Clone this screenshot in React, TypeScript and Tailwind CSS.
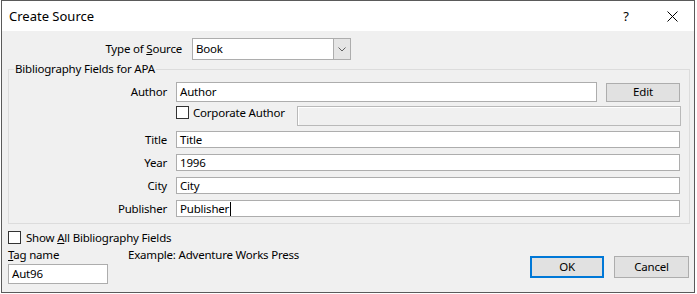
import React from "react";

const inputCls =
  "flex h-full w-full items-center border border-[#adadad] bg-white px-[3px] text-black";

function Field({ value, cursor }: { value: string; cursor?: boolean }) {
  return (
    <div className={inputCls}>
      <span>{value}</span>
      {cursor && <span className="ml-px h-[14px] w-px bg-black" />}
    </div>
  );
}

function Checkbox() {
  return <div className="h-[13px] w-[13px] shrink-0 border border-[#333333] bg-white" />;
}

function Row({ label, value, cursor }: { label: string; value: string; cursor?: boolean }) {
  return (
    <div className="flex h-[17px] items-center">
      <div className="w-[158px] text-right">{label}</div>
      <div className="ml-[9px] h-full w-[504px]">
        <Field value={value} cursor={cursor} />
      </div>
    </div>
  );
}

export default function App() {
  return (
    <div
      className="h-[294px] w-[697px] bg-white text-[11.5px] leading-[16px] tracking-[-0.2px] text-black"
      style={{ fontFamily: '"Noto Sans", "Segoe UI", sans-serif' }}
    >
      <div className="ml-px flex h-[293px] w-[694px] flex-col border border-[#5a5a5a]">
        {/* title bar */}
        <div className="flex h-[30px] shrink-0 items-center bg-white pl-[7px] tracking-normal">
          <span className="text-[13px]">Create Source</span>
          <span className="ml-auto text-[13px]">?</span>
          <svg className="ml-[38px] mr-[16px]" width="11" height="11" viewBox="0 0 11 11">
            <path d="M0.5 0.5 L10.5 10.5 M10.5 0.5 L0.5 10.5" stroke="#000" strokeWidth="1" />
          </svg>
        </div>

        {/* body */}
        <div className="flex flex-1 flex-col bg-[#f0f0f0]">
          {/* type of source */}
          <div className="mt-[7px] flex h-[22px] items-center">
            <div className="w-[180px] text-right">
              Type of <span className="underline">S</span>ource
            </div>
            <div className="ml-[10px] flex h-full w-[159px] border border-[#adadad] bg-white">
              <div className="flex flex-1 items-center px-[3px]">Book</div>
              <div className="flex w-[17px] items-center justify-center border-l border-[#adadad] bg-[#e5e5e5]">
                <svg width="8" height="5" viewBox="0 0 8 5">
                  <path d="M0.5 0.5 L4 4 L7.5 0.5" fill="none" stroke="#606060" strokeWidth="1" />
                </svg>
              </div>
            </div>
          </div>

          {/* group box */}
          <fieldset className="ml-[6px] mt-[1px] h-[163px] w-[682px] border border-[#dcdcdc] pl-0">
            <legend className="ml-[5px] px-px">Bibliography Fields for APA</legend>

            <div className="mt-[5px] flex h-[20px] items-center">
              <div className="w-[158px] text-right">Author</div>
              <div className="ml-[9px] h-full w-[421px]">
                <Field value="Author" />
              </div>
              <div className="ml-[9px] flex h-[19px] w-[74px] items-center justify-center border border-[#adadad] bg-[#e1e1e1]">
                Edit
              </div>
            </div>

            <div className="mt-[4px] flex h-[20px] items-start">
              <div className="ml-[167px] flex items-center">
                <Checkbox />
                <span className="ml-[4px] leading-[13px]">Corporate Author</span>
              </div>
              <div className="ml-auto mr-[8px] h-full w-[384px] border border-[#b9b9b9] bg-[#f0f0f0] shadow-[inset_1px_1px_0_#ffffff]" />
            </div>

            <div className="mt-[5px] flex flex-col gap-[6px]">
              <Row label="Title" value="Title" />
              <Row label="Year" value="1996" />
              <Row label="City" value="City" />
              <Row label="Publisher" value="Publisher" cursor />
            </div>
          </fieldset>

          {/* bottom area */}
          <div className="mt-[7px] flex h-[13px] items-center pl-[6px]">
            <Checkbox />
            <span className="ml-[5px]">
              Show <span className="underline">A</span>ll Bibliography Fields
            </span>
          </div>

          <div className="flex pl-[6px] pr-[5px]">
            <div className="flex flex-col">
              <div className="mt-[3px] flex h-[16px] items-center">
                <span className="w-[120px]">
                  <span className="underline">T</span>ag name
                </span>
                <span>Example: Adventure Works Press</span>
              </div>
              <div className="mt-px h-[20px] w-[100px]">
                <Field value="Aut96" />
              </div>
            </div>

            <div className="ml-auto mt-[12px] flex gap-[10px]">
              <div className="flex h-[22px] w-[74px] items-center justify-center border-2 border-[#0078d7] bg-[#e1e1e1]">
                OK
              </div>
              <div className="flex h-[22px] w-[75px] items-center justify-center border border-[#adadad] bg-[#e1e1e1]">
                Cancel
              </div>
            </div>
          </div>
        </div>
      </div>
    </div>
  );
}
